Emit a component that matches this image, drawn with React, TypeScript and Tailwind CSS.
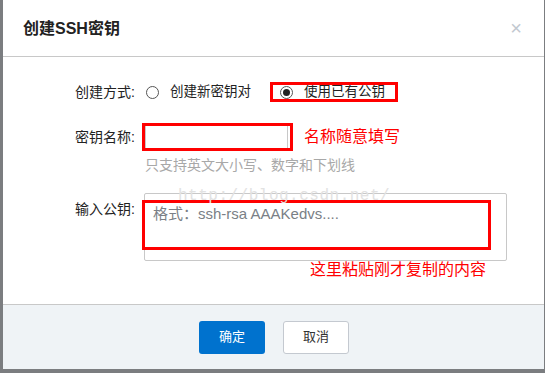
import React from 'react';

const font = { fontFamily: '"Liberation Sans", "Noto Sans CJK SC", sans-serif' };

const Radio: React.FC<{ checked?: boolean }> = ({ checked }) => (
  <span className="w-[13px] h-[13px] rounded-full border border-[#555] bg-white flex items-center justify-center shrink-0">
    {checked && <span className="w-[7px] h-[7px] rounded-full bg-[#222]" />}
  </span>
);

export default function App() {
  return (
    <div className="w-[545px] h-[373px] bg-[#7b7d80] pl-[3px] pr-[1px] pb-[4px]" style={font}>
      <div className="h-full bg-white flex flex-col">
        <div className="h-[57px] border-b border-[#c8c8c8] flex items-center justify-between pl-[20px] pr-[22px] shrink-0">
          <h2 className="text-[16px] font-bold text-[#222] pt-[2px]">创建SSH密钥</h2>
          <span className="text-[20px] leading-none text-[#c2c8d0] font-light">×</span>
        </div>

        <div className="flex-1 relative text-[14px] text-[#222]">
          <div className="absolute z-10 left-[175px] top-[132px] text-[16px] leading-[14px] tracking-[0.5px] text-[#e2e2e2] select-none pointer-events-none" style={{ fontFamily: '"Liberation Mono", monospace' }}>
            http://blog.csdn.net/
          </div>

          <div className="grid grid-cols-[132px_1fr] pt-[25px]">
            <div className="text-right h-[20px] leading-[20px]">创建方式:</div>
            <div className="flex items-center h-[20px] pl-[11px] text-[13.5px]">
              <Radio />
              <span className="ml-[11px]">创建新密钥对</span>
              <div className="relative flex items-center h-[20px] ml-[21px] pl-[8px]">
                <Radio checked />
                <span className="ml-[11px]">使用已有公钥</span>
                <span className="absolute left-[-2px] right-[-13px] top-[0px] bottom-[0px] border-[3px] border-[#ff0000]" />
              </div>
            </div>

            <div className="text-right mt-[23px] h-[24px] leading-[24px]">密钥名称:</div>
            <div className="flex items-center mt-[23px] pl-[10px]">
              <div className="relative">
                <div className="w-[143px] h-[24px] border border-[#c8c8c8] bg-white" />
                <span className="absolute left-[-3px] right-[-5px] top-[-2px] bottom-[-2px] border-[3px] border-[#ff0000]" />
              </div>
              <span className="ml-[16px] text-[16px] text-[#ff0000]">名称随意填写</span>
            </div>

            <div />
            <div className="pl-[10px] mt-[7px] text-[#a8a8a8] leading-[18px]">只支持英文大小写、数字和下划线</div>

            <div className="text-right mt-[19px] pt-[6px] leading-[20px]">输入公钥:</div>
            <div className="pl-[9px] mt-[19px]">
              <div className="relative w-[363px] h-[68px] border border-[#c8c8c8] rounded-[2px] bg-white">
                <div className="pt-[9px] pl-[8px] text-[15px] text-[#7a7f86]">格式：ssh-rsa AAAKedvs....</div>
                <span className="absolute left-[-3px] w-[349px] top-[6px] h-[50px] border-[3px] border-[#ff0000]" />
              </div>
              <div className="ml-[166px] mt-[-3px] text-[16px] text-[#ff0000]">这里粘贴刚才复制的内容</div>
            </div>
          </div>
        </div>

        <div className="h-[65px] border-t border-[#c8c8c8] bg-[#eff3f6] flex items-center pl-[196px] gap-[18px] shrink-0">
          <button className="w-[66px] h-[33px] rounded-[3px] bg-[#0072ce] text-white text-[13px]">确定</button>
          <button className="w-[66px] h-[33px] rounded-[3px] bg-white border border-[#c4c9d0] text-[#333] text-[13px]">取消</button>
        </div>
      </div>
    </div>
  );
}
